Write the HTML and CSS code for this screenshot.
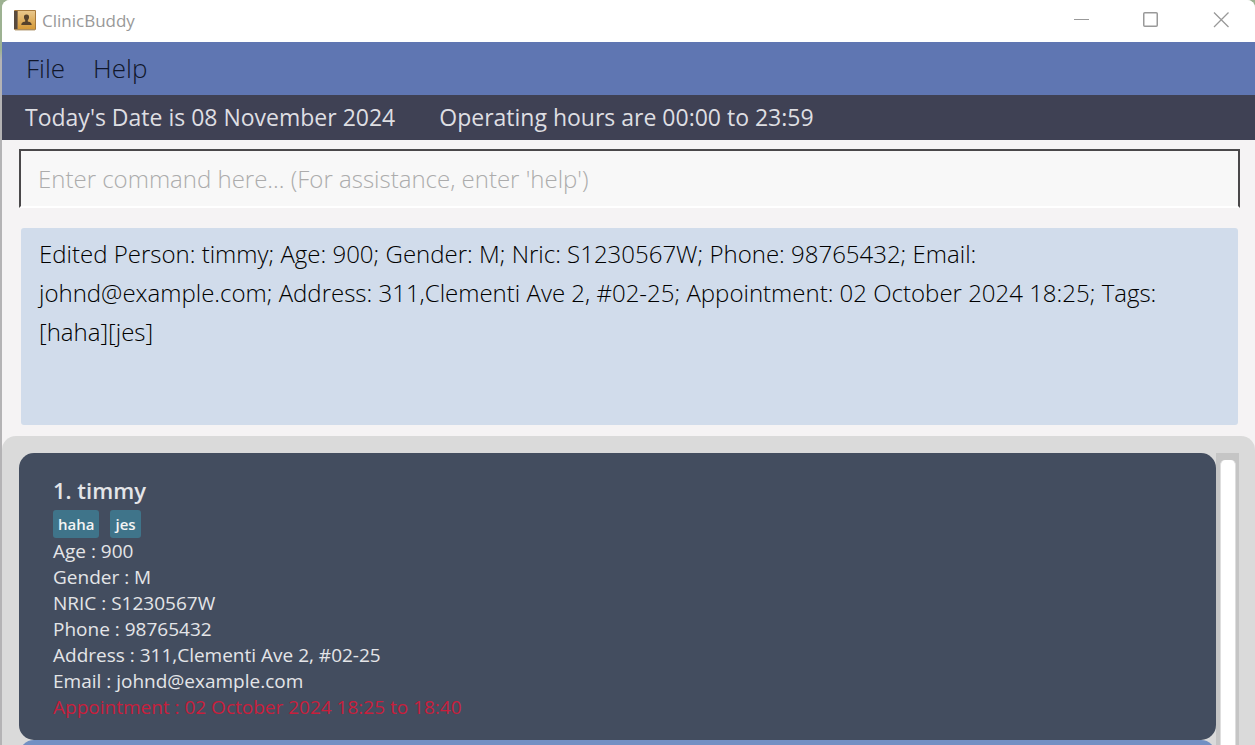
FILE: index.html
```html
<!DOCTYPE html>
<html lang="en">
<head>
<meta charset="utf-8">
<meta name="viewport" content="width=device-width, initial-scale=1">
<title>ClinicBuddy</title>
<link rel="stylesheet" href="styles.css">
</head>
<body>
<div class="window">
  <header class="titlebar">
    <svg class="app-icon" width="22" height="21" viewBox="0 0 22 21" aria-hidden="true">
      <defs>
        <linearGradient id="cover" x1="0" y1="0" x2="0" y2="1">
          <stop offset="0" stop-color="#e9c78c"/>
          <stop offset="1" stop-color="#d69a38"/>
        </linearGradient>
      </defs>
      <rect x="0" y="0" width="22" height="20" rx="1" fill="#a87a3c"/>
      <rect x="4" y="1" width="17" height="18" fill="url(#cover)"/>
      <path d="M0 1h3v18H0z" fill="#594a3d"/>
      <path d="M3 1h1v18H3z" fill="#8f714b"/>
      <path d="M1 20h20" stroke="#b9a27c"/>
      <path d="M12.500 4.500c2 0 2.700 1.300 2.500 3-.1 1.400-.7 2-1.200 2.700v1.200c1.500.5 3.700.6 3.900 3.600H7.300c.2-3 2.400-3.100 3.900-3.600v-1.200C10.700 9.500 10.100 8.900 10 7.500c-.2-1.700.5-3 2.500-3z" fill="#56422c"/>
    </svg>
    <h1 class="app-name">ClinicBuddy</h1>
    <div class="window-controls">
      <button class="window-button" type="button" aria-label="Minimize">
        <svg width="16" height="16" viewBox="0 0 16 16"><path d="M1 7.500h15"/></svg>
      </button>
      <button class="window-button" type="button" aria-label="Maximize">
        <svg width="16" height="16" viewBox="0 0 16 16"><rect x="0.750" y="0.750" width="13.500" height="13.500" rx="1" stroke-width="1.500"/></svg>
      </button>
      <button class="window-button" type="button" aria-label="Close">
        <svg width="16" height="16" viewBox="0 0 16 16"><path d="M1 0.500l14.500 14.500M15.500 0.500L1 15" stroke-width="1.300"/></svg>
      </button>
    </div>
  </header>
  <nav class="menubar">
    <button class="menu" type="button">File</button>
    <button class="menu" type="button">Help</button>
  </nav>
  <div class="infobar">
    <span>Today's Date is 08 November 2024</span>
    <span>Operating hours are 00:00 to 23:59</span>
  </div>
  <div class="command-pane">
    <input class="command" type="text" aria-label="Command" placeholder="Enter command here... (For assistance, enter 'help')">
  </div>
  <div class="result-pane">
    <textarea class="result" aria-label="Result" readonly>Edited Person: timmy; Age: 900; Gender: M; Nric: S1230567W; Phone: 98765432; Email: johnd@example.com; Address: 311,Clementi Ave 2, #02-25; Appointment: 02 October 2024 18:25; Tags: [haha][jes]</textarea>
  </div>
  <main class="list-pane">
    <div class="people">
      <article class="card">
        <h2 class="person">1. timmy</h2>
        <div class="tags"><span class="tag">haha</span><span class="tag">jes</span></div>
        <p class="field">Age : 900</p>
        <p class="field">Gender : M</p>
        <p class="field">NRIC : S1230567W</p>
        <p class="field">Phone : 98765432</p>
        <p class="field">Address : 311,Clementi Ave 2, #02-25</p>
        <p class="field">Email : johnd@example.com</p>
        <p class="field appointment">Appointment : 02 October 2024 18:25 to 18:40</p>
      </article>
      <article class="card card-alt"></article>
    </div>
    <div class="scrollbar"><div class="thumb"></div></div>
  </main>
</div>
</body>
</html>
```
FILE: styles.css
```css
* {
  box-sizing: border-box;
}

body {
  margin: 0;
  padding-left: 2px;
  background: linear-gradient(#9db292 0, #9db292 50px, #b4b3b5 60px);
  font-family: "Open Sans", "Noto Sans", sans-serif;
}

button,
input,
textarea {
  font-family: inherit;
}

.window {
  display: flex;
  flex-direction: column;
  height: 100vh;
  overflow: hidden;
  border-radius: 8px 8px 0 0;
  background: #f5f3f4;
}

.titlebar {
  display: flex;
  flex: none;
  align-items: center;
  height: 42px;
  padding: 0 0 2px 12px;
  background: #fff;
}

.app-icon {
  margin-right: 6px;
}

.app-name {
  margin: 0;
  color: #999;
  font-size: 17px;
  font-weight: 400;
}

.window-controls {
  display: flex;
  margin-left: auto;
}

.window-button {
  display: flex;
  align-items: center;
  justify-content: center;
  width: 70px;
  height: 38px;
  padding: 0 0 0 2px;
  border: 0;
  background: none;
}

.window-button svg {
  fill: none;
  stroke: #999;
}

.menubar {
  display: flex;
  flex: none;
  gap: 28px;
  height: 53px;
  padding: 0 24px;
  background: #5f76b2;
}

.menu {
  padding: 0 0 2px;
  border: 0;
  background: none;
  color: #10162a;
  font-size: 26px;
  font-weight: 300;
}

.infobar {
  display: flex;
  flex: none;
  align-items: center;
  gap: 44px;
  height: 45px;
  padding: 0 23px 2px;
  background: #3f4154;
  color: #dedee2;
  font-size: 23px;
}

.command-pane {
  flex: none;
  padding: 9px 15px 8px 17px;
}

.command {
  display: block;
  width: 100%;
  height: 59px;
  padding: 0 17px;
  border: 2px solid #4a484a;
  border-bottom-color: #fff;
  border-radius: 0;
  background: #f8f8f8;
  font-size: 24px;
  font-weight: 300;
}

.command::placeholder {
  color: #acacac;
  opacity: 1;
}

.result-pane {
  flex: none;
  padding: 12px 17px 11px 19px;
}

.result {
  display: block;
  width: 100%;
  height: 197px;
  padding: 6px 32px 6px 18px;
  border: 0;
  border-radius: 3px;
  background: #d1dceb;
  color: #000;
  font-size: 24px;
  font-weight: 300;
  line-height: 39px;
  resize: none;
}

.list-pane {
  display: flex;
  flex: 1;
  min-height: 0;
  padding: 17px 16px 0 17px;
  border-radius: 14px 14px 0 0;
  background: #dadada;
}

.people {
  flex: 1;
  overflow: hidden;
}

.card {
  min-height: 287px;
  padding: 21px 34px 20px;
  border-radius: 15px;
  background: #434d5f;
  color: #e4e5e8;
}

.card-alt {
  background: #7290c3;
}

.person {
  margin: 0;
  font-size: 22px;
  font-weight: 600;
  line-height: 32px;
}

.tags {
  display: flex;
  gap: 11px;
  margin: 4px 0 0;
}

.tag {
  padding: 0 5px;
  border-radius: 3px;
  background: #3f748a;
  color: #f4f4f4;
  font-size: 15px;
  font-weight: 600;
  line-height: 28px;
}

.field {
  margin: 0;
  font-size: 19px;
  line-height: 26px;
}

.appointment {
  color: #c81e3c;
}

.scrollbar {
  display: flex;
  flex: none;
  width: 23px;
  padding: 7px 3px 0 4px;
  background: #c5c5c5;
}

.thumb {
  flex: 1;
  border: 1px solid #dedede;
  border-width: 0 1px;
  border-radius: 5px 5px 0 0;
  background: #fff;
}
```
